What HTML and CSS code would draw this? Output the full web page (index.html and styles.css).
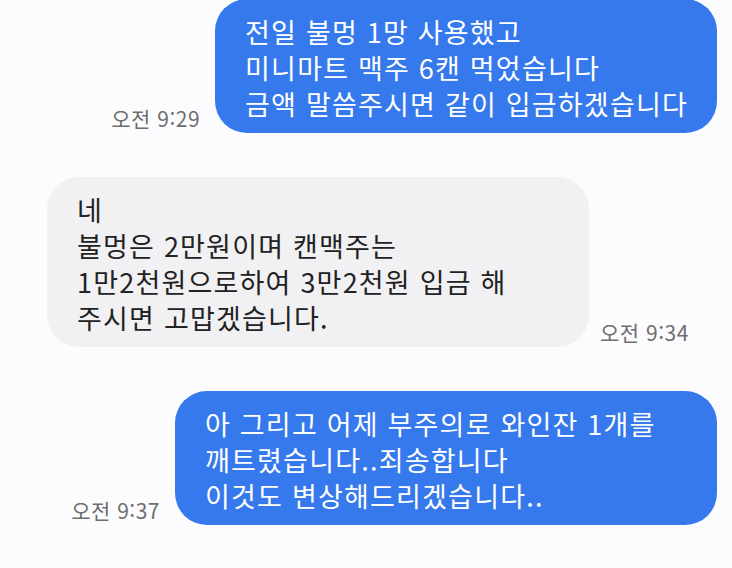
FILE: index.html
```html
<!DOCTYPE html>
<html lang="ko">
  <head>
    <meta charset="UTF-8" />
    <meta name="viewport" content="width=device-width, initial-scale=1.0" />
    <title>Messages</title>
    <link rel="stylesheet" href="styles.css">
  </head>
  <body>
    <div class="chat">
      <div class="row sent">
        <span class="time">오전 9:29</span>
        <div class="bubble blue">
          전일 불멍 1망 사용했고<br />
          미니마트 맥주 6캔 먹었습니다<br />
          금액 말씀주시면 같이 입금하겠습니다
        </div>
      </div>
      <div class="row received">
        <div class="bubble grey wide">
          네<br />
          불멍은 2만원이며 캔맥주는<br />
          1만2천원으로하여 3만2천원 입금 해<br />
          주시면 고맙겠습니다.
        </div>
        <span class="time">오전 9:34</span>
      </div>
      <div class="row sent">
        <span class="time">오전 9:37</span>
        <div class="bubble blue wide">
          아 그리고 어제 부주의로 와인잔 1개를<br />
          깨트렸습니다..죄송합니다<br />
          이것도 변상해드리겠습니다..
        </div>
      </div>
    </div>
  </body>
</html>
```

FILE: styles.css
```css
body {
  margin: 0;
  background: #fcfcfe;
  font-family: "Noto Sans CJK KR", "Noto Sans", sans-serif;
}

.chat {
  display: flex;
  flex-direction: column;
  gap: 44px;
  margin-top: -1px;
}

.row {
  display: flex;
  align-items: flex-end;
}
.row.sent {
  justify-content: flex-end;
  padding-right: 15px;
  gap: 15px;
}
.row.received {
  padding-left: 47px;
  gap: 11px;
}

.bubble {
  box-sizing: border-box;
  padding: 15px 29px 11px 30px;
  border-radius: 32px;
  font-size: 27px;
  letter-spacing: 1.2px;
  line-height: 36px;
  white-space: nowrap;
}
.bubble.wide {
  width: 542px;
}
.bubble.blue {
  background: #3579ec;
  color: #ffffff;
}
.bubble.grey {
  background: #f1f1f3;
  color: #222222;
}

.time {
  font-size: 21px;
  letter-spacing: 0.5px;
  line-height: 24px;
  color: #6e6e6e;
  padding-bottom: 3px;
}
```
